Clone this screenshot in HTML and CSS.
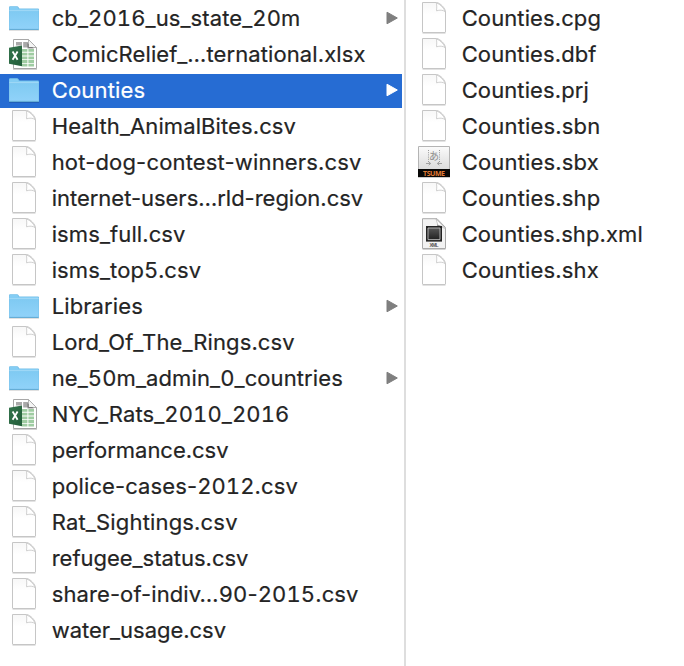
FILE: index.html
```html
<!DOCTYPE html>
<html lang="en">
<head>
<meta charset="utf-8">
<title>Files</title>
<link rel="stylesheet" href="styles.css">
</head>
<body>
<svg class="defs" width="0" height="0" aria-hidden="true">
  <defs>
    <linearGradient id="blue" x1="0" y1="0" x2="0" y2="1"><stop offset="0" stop-color="#7fcaf2"/><stop offset="1" stop-color="#90d2f9"/></linearGradient>
    <linearGradient id="paper" x1="0" y1="0" x2="0" y2="1"><stop offset="0" stop-color="#f7f7f7"/><stop offset=".4" stop-color="#fff"/></linearGradient>
    <linearGradient id="green" x1="0" y1="0" x2="1" y2="1"><stop offset="0" stop-color="#34744d"/><stop offset="1" stop-color="#225d39"/></linearGradient>
    <linearGradient id="grey" x1="0" y1="0" x2="0" y2="1"><stop offset="0" stop-color="#fbfbfb"/><stop offset="1" stop-color="#d2d2d2"/></linearGradient>
    <linearGradient id="dark" x1="0" y1="0" x2="0" y2="1"><stop offset="0" stop-color="#555"/><stop offset="1" stop-color="#222"/></linearGradient>
  </defs>
  <symbol id="folder" viewBox="0 0 32 36">
    <path d="M1 30.5h30" stroke="#000" stroke-opacity=".12"/>
    <path d="M1 29V7.2Q1 6.2 2 6.2H9.2Q10 6.2 10.6 7.2L11.4 8.5H30Q31 8.5 31 9.5V29Q31 30 30 30H2Q1 30 1 29Z" fill="#76bfe8"/>
    <path d="M1.5 10V7.4Q1.5 6.7 2.2 6.7H9.2L10.6 9H30V10Z" fill="#84cdf4"/>
    <path d="M1.4 11H30.6V29H1.4Z" fill="url(#blue)"/>
    <path d="M1.3 10.6H30.7" stroke="#a7dcf8" stroke-width=".9"/>
    <path d="M1.3 29.4H30.7" stroke="#64acd4" stroke-width="1"/>
  </symbol>
  <symbol id="file" viewBox="0 0 32 36">
    <path d="M4.5 33.4H27.5" stroke="#000" stroke-opacity=".13"/>
    <path d="M4.5 2.5H18.5C22 2.8 27.5 8.2 27.5 12V32Q27.5 32.5 27 32.5H5Q4.5 32.5 4.5 32Z" fill="url(#paper)" stroke="#c6c6c6"/>
    <path d="M18.3 2.9C19 5.5 18.7 8.4 18.5 10.8C21.5 9.8 25 9.9 27.2 11.7C26 8 22 4 18.3 2.9Z" fill="#fff" stroke="#cbcbcb" stroke-width=".9"/>
  </symbol>
  <symbol id="excel" viewBox="0 0 32 36">
    <path d="M5.5 3.5H20.5L28.5 11.5V32.5H5.5Z" fill="#fff" stroke="#a8a8a8"/>
    <path d="M5 33.4H29" stroke="#000" stroke-opacity=".2"/>
    <path d="M8 6H14V9.5H8ZM15.2 6H20V11.5H15.2Z" fill="#a9a9a9"/>
    <path d="M20.5 3.8V11.5H28.3Z" fill="#f5f5f5" stroke="#999" stroke-width=".8"/>
    <path d="M19.5 7V12.4H26Z" fill="#555" opacity=".6"/>
    <path d="M20.9 4.5V11H27.5Z" fill="#f5f5f5"/>
    <path d="M14 13h5.4v2.8h-5.4zM20.4 13h5.6v2.8h-5.6zM14 16.7h5.4v2.8h-5.4zM20.4 16.7h5.6v2.8h-5.6zM14 20.4h5.4v2.8h-5.4zM20.4 20.4h5.6v2.8h-5.6zM14 24.1h5.4v2.8h-5.4zM20.4 24.1h5.6v2.8h-5.6zM14 27.8h5.4v2.6h-5.4zM20.4 27.8h5.6v2.6h-5.6z" fill="#9fcca2"/>
    <path d="M1 11.7L14 9.5V30.2L1 27.8Z" fill="url(#green)"/>
    <path d="M4.6 15.5L9.6 23.7M9.6 15.5L4.6 23.7" stroke="#fff" stroke-width="1.8"/>
  </symbol>
  <symbol id="arrow" viewBox="0 0 13 14"><path d="M1 1.2L11.3 7L1 12.8Z" fill="currentColor" stroke="currentColor" stroke-linejoin="round"/></symbol>
</svg>
<main class="browser">
  <ul class="column column-main">
    <li class="row"><svg class="icon"><use href="#folder"/></svg><span class="name num">cb_2016_us_state_20m</span><svg class="arrow"><use href="#arrow"/></svg></li>
    <li class="row"><svg class="icon"><use href="#excel"/></svg><span class="name">ComicRelief_…ternational.xlsx</span></li>
    <li class="row selected"><svg class="icon"><use href="#folder"/></svg><span class="name loose">Counties</span><svg class="arrow"><use href="#arrow"/></svg></li>
    <li class="row"><svg class="icon"><use href="#file"/></svg><span class="name">Health_AnimalBites.csv</span></li>
    <li class="row"><svg class="icon"><use href="#file"/></svg><span class="name loose">hot-dog-contest-winners.csv</span></li>
    <li class="row"><svg class="icon"><use href="#file"/></svg><span class="name tight">internet-users…rld-region.csv</span></li>
    <li class="row"><svg class="icon"><use href="#file"/></svg><span class="name">isms_full.csv</span></li>
    <li class="row"><svg class="icon"><use href="#file"/></svg><span class="name num">isms_top5.csv</span></li>
    <li class="row"><svg class="icon"><use href="#folder"/></svg><span class="name">Libraries</span><svg class="arrow"><use href="#arrow"/></svg></li>
    <li class="row"><svg class="icon"><use href="#file"/></svg><span class="name">Lord_Of_The_Rings.csv</span></li>
    <li class="row"><svg class="icon"><use href="#folder"/></svg><span class="name num">ne_50m_admin_0_countries</span><svg class="arrow"><use href="#arrow"/></svg></li>
    <li class="row"><svg class="icon"><use href="#excel"/></svg><span class="name num">NYC_Rats_2010_2016</span></li>
    <li class="row"><svg class="icon"><use href="#file"/></svg><span class="name tight">performance.csv</span></li>
    <li class="row"><svg class="icon"><use href="#file"/></svg><span class="name">police-cases-<span class="num">2012</span>.csv</span></li>
    <li class="row"><svg class="icon"><use href="#file"/></svg><span class="name loose">Rat_Sightings.csv</span></li>
    <li class="row"><svg class="icon"><use href="#file"/></svg><span class="name tight">refugee_status.csv</span></li>
    <li class="row"><svg class="icon"><use href="#file"/></svg><span class="name">share-of-indiv…<span class="num">90</span>-<span class="num">2015</span>.csv</span></li>
    <li class="row"><svg class="icon"><use href="#file"/></svg><span class="name tight">water_usage.csv</span></li>
  </ul>
  <ul class="column column-detail">
    <li class="row"><svg class="icon"><use href="#file"/></svg><span class="name">Counties.cpg</span></li>
    <li class="row"><svg class="icon"><use href="#file"/></svg><span class="name">Counties.dbf</span></li>
    <li class="row"><svg class="icon"><use href="#file"/></svg><span class="name">Counties.prj</span></li>
    <li class="row"><svg class="icon"><use href="#file"/></svg><span class="name loose">Counties.sbn</span></li>
    <li class="row">
      <svg class="icon" viewBox="0 0 32 36">
        <path d="M0 33.5H32" stroke="#000" stroke-opacity=".2"/>
        <path d="M.5 2.5H31.5V32H.5Z" fill="url(#grey)" stroke="#b4b4b4"/>
        <path d="M10.5 6V18M21.5 6V18" stroke="#999" stroke-dasharray="1 1.2"/>
        <path d="M8 19.5h4.5M10.7 17.8l2 1.7-2 1.7M24 19.5h-4.5M21.3 17.8l-2 1.7 2 1.7" fill="none" stroke="#9a9a9a" stroke-width=".9"/>
        <text class="kana" x="16" y="15.8">あ</text>
        <path d="M0 25H32V33H0Z" fill="#090807"/>
        <text class="tsume" x="16" y="31.6" textLength="22">TSUME</text>
      </svg>
      <span class="name loose">Counties.sbx</span></li>
    <li class="row"><svg class="icon"><use href="#file"/></svg><span class="name loose">Counties.shp</span></li>
    <li class="row">
      <svg class="icon" viewBox="0 0 32 36">
        <path d="M4.5 33.4H27.5" stroke="#000" stroke-opacity=".2"/>
        <path d="M4.5 2.7H19L27.5 11.5V32.5H4.5Z" fill="#f2f2f2" stroke="#aaa"/>
        <path d="M18 3L27.3 12.5L20 9.5Z" fill="#fff" stroke="#bbb" stroke-width=".8"/>
        <path d="M19 8.5L25.5 10.5H19Z" fill="#777" opacity=".7"/>
        <path d="M8 10H24V25.6H8Z" fill="#222"/>
        <path d="M10 12H22V23.6H10Z" fill="url(#dark)" stroke="#bbb" stroke-width=".9"/>
        <text class="xmltext" x="16" y="30.6" textLength="9">XML</text>
      </svg>
      <span class="name">Counties.shp.xml</span></li>
    <li class="row"><svg class="icon"><use href="#file"/></svg><span class="name loose">Counties.shx</span></li>
  </ul>
</main>
</body>
</html>
```
FILE: styles.css
```css
* { box-sizing: border-box; }
body {
  margin: 0;
  background: #fff;
  color: #242424;
  font: 22px/36px Inter, "Liberation Sans", sans-serif;
  overflow: hidden;
}
.defs { display: block; height: 0; }
.browser { display: flex; height: 666px; }
.column { list-style: none; margin: 0; padding: 0; }
.column-main { width: 406px; padding-right: 2px; border-right: 2px solid #dedede; }
.column-detail { flex: 1; padding-left: 4px; }
.row {
  display: flex;
  align-items: center;
  height: 36px;
  padding: 0 3px 0 8px;
}
.icon { width: 32px; height: 36px; flex: none; }
.name {
  flex: 1;
  margin-left: 11.7px;
  white-space: nowrap;
  letter-spacing: 0.1px;
  -webkit-text-stroke: 0.2px currentColor;
}
.num { font-variant-numeric: tabular-nums; }
.tight { letter-spacing: -0.02px; }
.loose { letter-spacing: 0.17px; }
.arrow { width: 13px; height: 14px; flex: none; color: #7f7f7f; }
.selected {
  color: #fff;
  background: linear-gradient(#266cd3, #266cd3) 0 2px / 100% 34px no-repeat;
}
.selected .arrow { color: #fff; }
.kana { font: 10px "Noto Sans CJK JP", sans-serif; fill: #8e8e8e; text-anchor: middle; }
.tsume { font: bold 7px "Open Sans", sans-serif; fill: #e07b35; text-anchor: middle; }
.xmltext { font: bold 5px "Liberation Sans", sans-serif; fill: #555; text-anchor: middle; }
```
